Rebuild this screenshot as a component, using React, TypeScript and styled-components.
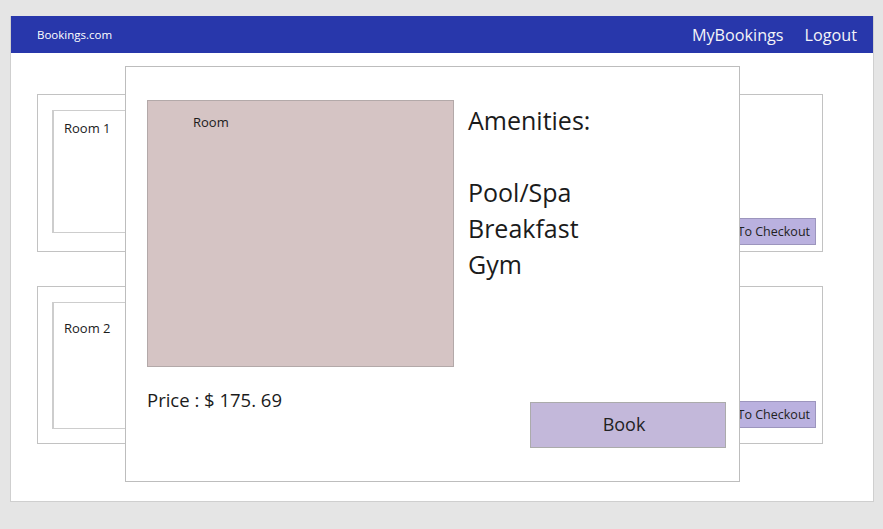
import styled, { createGlobalStyle } from 'styled-components'

const GlobalStyle = createGlobalStyle`
  html, body {
    margin: 0;
    padding: 0;
    background: #e5e5e5;
    font-family: 'Open Sans', 'Noto Sans', sans-serif;
    color: #1b1b1b;
  }
  * { box-sizing: border-box; }
`

const Page = styled.div`
  width: 883px;
  height: 529px;
  padding: 16px 9px 27px 10px;
`

const Frame = styled.div`
  position: relative;
  width: 864px;
  height: 486px;
  background: #fff;
  border: 1px solid #cfcfcf;
  border-top: none;
  display: flex;
  flex-direction: column;
`

const TopBar = styled.header`
  height: 37px;
  background: #2837ab;
  display: flex;
  align-items: center;
  padding: 0 16px 0 26px;
  color: #fff;
`

const Brand = styled.span`
  font-size: 11.5px;
  font-weight: 500;
  flex: 1;
`

const NavLink = styled.a<{ $gap?: number }>`
  font-size: 16.2px;
  margin-left: ${p => p.$gap ?? 0}px;
  color: #f4f4f8;
  text-decoration: none;
`

const Main = styled.main`
  display: flex;
  flex-direction: column;
  gap: 34px;
  padding: 41px 50px 0 26px;
`

const Card = styled.div`
  height: 158px;
  border: 1px solid #c2c2c2;
  display: flex;
  align-items: flex-start;
  justify-content: space-between;
  padding: 15px 6px 0 14px;
`

const RoomBox = styled.div<{ $h: number; $pad: number }>`
  width: 200px;
  height: ${p => p.$h}px;
  border: 1px solid #cdcdcd;
  border-left-width: 2px;
  padding: ${p => p.$pad}px 10px;
  font-size: 13px;
`

const CheckoutBtn = styled.button<{ $top: number }>`
  margin-top: ${p => p.$top}px;
  width: 90px;
  height: 27px;
  background: #bab1df;
  border: 1px solid #9c95bd;
  font-family: inherit;
  font-size: 12.5px;
  color: #222;
  text-align: right;
  padding: 0 5px 1px 0;
`

const Modal = styled.div`
  position: absolute;
  left: 114px;
  top: 50px;
  width: 615px;
  height: 416px;
  background: #fff;
  border: 1px solid #bdbdbd;
  padding: 33px 13px 0 21px;
  display: flex;
  flex-direction: column;
`

const ModalTop = styled.div`
  display: flex;
  gap: 15px;
`

const Photo = styled.div`
  width: 307px;
  height: 267px;
  background: #d5c4c4;
  border: 1px solid #b3a9a9;
  padding: 12px 0 0 45px;
  font-size: 13px;
`

const Amenities = styled.div`
  font-size: 25px;
  line-height: 36px;
  padding-top: 2px;
  margin-left: -1px;
`

const ModalBottom = styled.div`
  display: flex;
  justify-content: space-between;
  align-items: flex-start;
  margin-top: 20px;
`

const Price = styled.div`
  font-size: 18.5px;
`

const BookBtn = styled.button`
  width: 196px;
  height: 46px;
  margin-top: 15px;
  padding: 0 8px 2px 0;
  background: #c3b8da;
  border: 1px solid #ababab;
  font-family: inherit;
  font-size: 18px;
  color: #222;
`

export default function App() {
  return (
    <>
      <GlobalStyle />
      <Page>
        <Frame>
          <TopBar>
            <Brand>Bookings.com</Brand>
            <NavLink>MyBookings</NavLink>
            <NavLink $gap={21}>Logout</NavLink>
          </TopBar>
          <Main>
            <Card>
              <RoomBox $h={123} $pad={8}>Room 1</RoomBox>
              <CheckoutBtn $top={108}>To Checkout</CheckoutBtn>
            </Card>
            <Card>
              <RoomBox $h={127} $pad={16}>Room 2</RoomBox>
              <CheckoutBtn $top={99}>To Checkout</CheckoutBtn>
            </Card>
          </Main>
          <Modal>
            <ModalTop>
              <Photo>Room</Photo>
              <Amenities>
                Amenities:
                <br />
                <br />
                Pool/Spa
                <br />
                Breakfast
                <br />
                Gym
              </Amenities>
            </ModalTop>
            <ModalBottom>
              <Price>Price : $ 175. 69</Price>
              <BookBtn>Book</BookBtn>
            </ModalBottom>
          </Modal>
        </Frame>
      </Page>
    </>
  )
}
